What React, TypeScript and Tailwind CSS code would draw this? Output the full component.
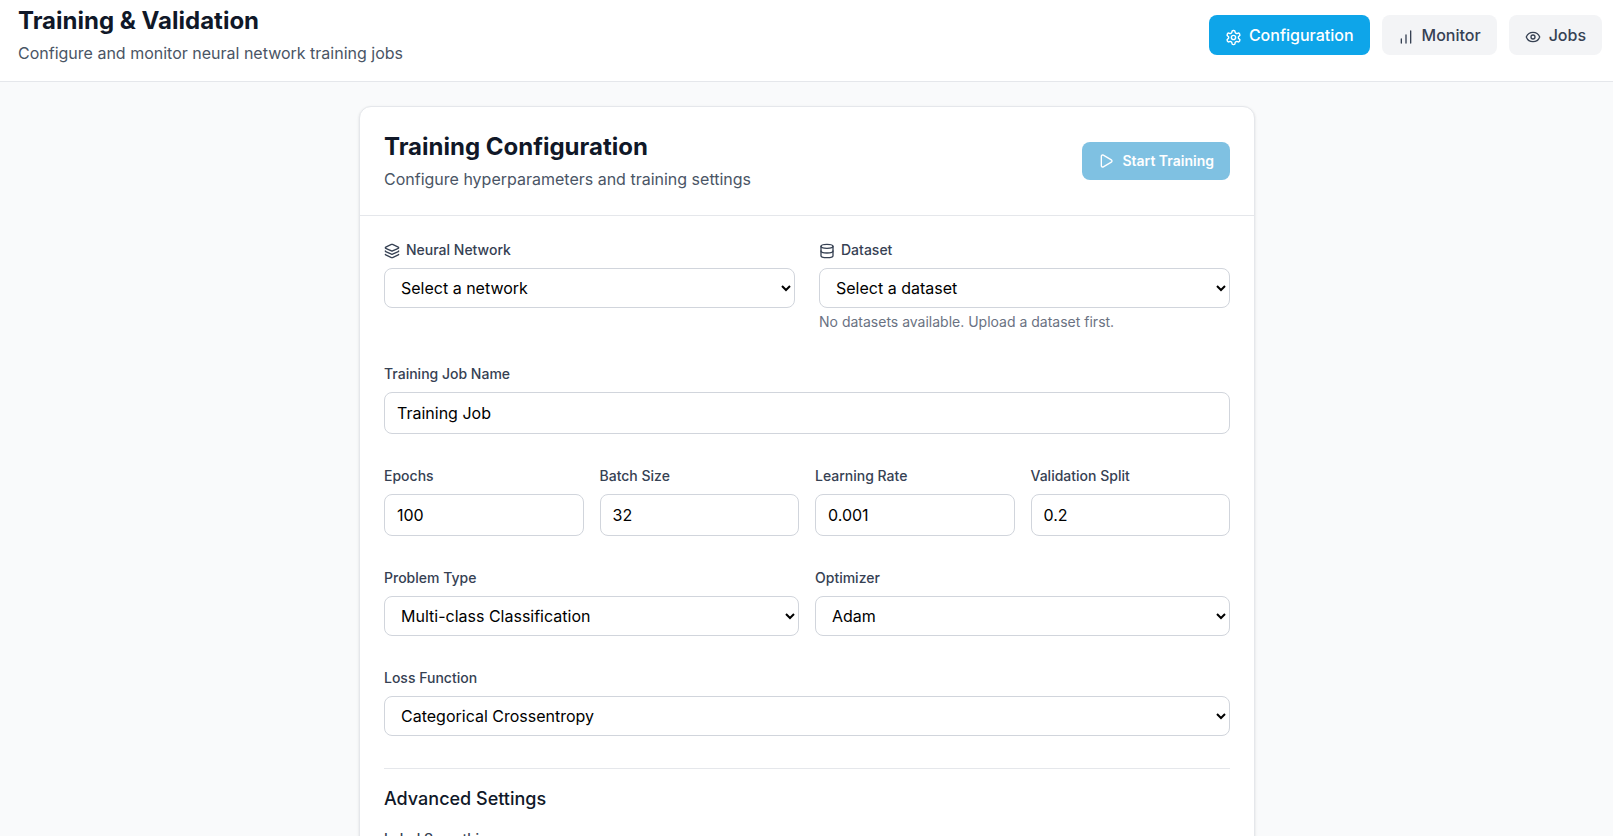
import React from 'react';
import { ChartNoAxesColumnIncreasing, Database, Eye, Layers, Play } from 'lucide-react';

const labelClass = 'block text-sm font-medium text-gray-700 mb-2';
const inputClass = 'w-full px-3 py-2 text-base text-black bg-white border border-gray-300 rounded-lg';
const selectClass = 'w-full px-3 py-2 text-base text-black bg-white border border-gray-300 rounded-lg';

// the gear with the rounder teeth, lucide's current one differs
const GearIcon = () => (
  <svg viewBox="0 0 24 24" fill="none" stroke="currentColor" strokeWidth="2" strokeLinecap="round" strokeLinejoin="round" className="w-[17px] h-[17px] mt-1 -mr-px">
    <path d="M12.22 2h-.44a2 2 0 0 0-2 2v.18a2 2 0 0 1-1 1.73l-.43.25a2 2 0 0 1-2 0l-.15-.08a2 2 0 0 0-2.73.73l-.22.38a2 2 0 0 0 .73 2.73l.15.1a2 2 0 0 1 1 1.72v.51a2 2 0 0 1-1 1.74l-.15.09a2 2 0 0 0-.73 2.73l.22.38a2 2 0 0 0 2.73.73l.15-.08a2 2 0 0 1 2 0l.43.25a2 2 0 0 1 1 1.73V20a2 2 0 0 0 2 2h.44a2 2 0 0 0 2-2v-.18a2 2 0 0 1 1-1.73l.43-.25a2 2 0 0 1 2 0l.15.08a2 2 0 0 0 2.73-.73l.22-.39a2 2 0 0 0-.73-2.73l-.15-.08a2 2 0 0 1-1-1.74v-.5a2 2 0 0 1 1-1.74l.15-.09a2 2 0 0 0 .73-2.73l-.22-.38a2 2 0 0 0-2.73-.73l-.15.08a2 2 0 0 1-2 0l-.43-.25a2 2 0 0 1-1-1.73V4a2 2 0 0 0-2-2z" />
    <circle cx="12" cy="12" r="3" />
  </svg>
);

const Select: React.FC<{ value: string }> = ({ value }) => (
  <select className={selectClass} defaultValue={value}>
    <option>{value}</option>
  </select>
);

const NumberField: React.FC<{ label: string; value: string }> = ({ label, value }) => (
  <div>
    <label className={labelClass}>{label}</label>
    <input type="text" className={inputClass} defaultValue={value} />
  </div>
);

const App: React.FC = () => {
  return (
    <div className="h-screen overflow-hidden flex flex-col bg-gray-50 font-['Inter',sans-serif]">
      <header className="bg-white border-b border-gray-200 pl-[18px] pr-[11px] pb-[11px] h-[82px] flex items-center justify-between shrink-0">
        <div>
          <h1 className="text-2xl font-bold text-gray-900">Training &amp; Validation</h1>
          <p className="text-gray-600 mt-1">Configure and monitor neural network training jobs</p>
        </div>
        <div className="flex items-center gap-3">
          <button className="flex items-center gap-2 px-4 py-2 rounded-lg font-medium bg-[#0ea5e9] text-white">
            <GearIcon />
            Configuration
          </button>
          <button className="flex items-center gap-2 px-4 py-2 rounded-lg font-medium bg-gray-100 text-gray-700">
            <ChartNoAxesColumnIncreasing className="w-4 h-4 mt-1" />
            Monitor
          </button>
          <button className="flex items-center gap-2 px-4 py-2 rounded-lg font-medium bg-gray-100 text-gray-700">
            <Eye className="w-4 h-4 mt-1" />
            Jobs
          </button>
        </div>
      </header>

      <main className="flex-1 overflow-hidden py-6 pl-px">
        <div className="max-w-4xl mx-auto bg-white rounded-xl border border-gray-200 shadow-sm">
          <div className="p-6 border-b border-gray-200 flex items-center justify-between">
            <div>
              <h2 className="text-2xl font-bold text-gray-900">Training Configuration</h2>
              <p className="text-gray-600 mt-1">Configure hyperparameters and training settings</p>
            </div>
            <button disabled className="flex items-center gap-2 px-4 py-2 rounded-lg text-sm font-semibold bg-[#0284c7] text-white opacity-50 h-[38px]">
              <Play className="w-4 h-4" />
              Start Training
            </button>
          </div>

          <div className="p-6 flex flex-col gap-8">
            <div className="grid grid-cols-2 gap-6">
              <div>
                <label className={labelClass}>
                  <Layers className="w-4 h-4 inline mr-1.5 align-[-4px]" />
                  Neural Network
                </label>
                <Select value="Select a network" />
              </div>
              <div>
                <label className={labelClass}>
                  <Database className="w-4 h-4 inline mr-1.5 align-[-4px]" />
                  Dataset
                </label>
                <Select value="Select a dataset" />
                <p className="text-sm text-gray-500 mt-1">No datasets available. Upload a dataset first.</p>
              </div>
            </div>

            <div>
              <label className={labelClass}>Training Job Name</label>
              <input type="text" className={inputClass} defaultValue="Training Job" />
            </div>

            <div className="grid grid-cols-4 gap-4">
              <NumberField label="Epochs" value="100" />
              <NumberField label="Batch Size" value="32" />
              <NumberField label="Learning Rate" value="0.001" />
              <NumberField label="Validation Split" value="0.2" />
            </div>

            <div className="grid grid-cols-2 gap-4">
              <div>
                <label className={labelClass}>Problem Type</label>
                <Select value="Multi-class Classification" />
              </div>
              <div>
                <label className={labelClass}>Optimizer</label>
                <Select value="Adam" />
              </div>
            </div>

            <div>
              <label className={labelClass}>Loss Function</label>
              <Select value="Categorical Crossentropy" />
            </div>

            <div className="border-t border-gray-200 pt-4">
              <h3 className="text-lg font-medium text-gray-900 mb-4">Advanced Settings</h3>
              <div>
                <label className={labelClass}>Label Smoothing</label>
                <input type="text" className={inputClass} defaultValue="0" />
              </div>
            </div>
          </div>
        </div>
      </main>
    </div>
  );
};

export default App;
